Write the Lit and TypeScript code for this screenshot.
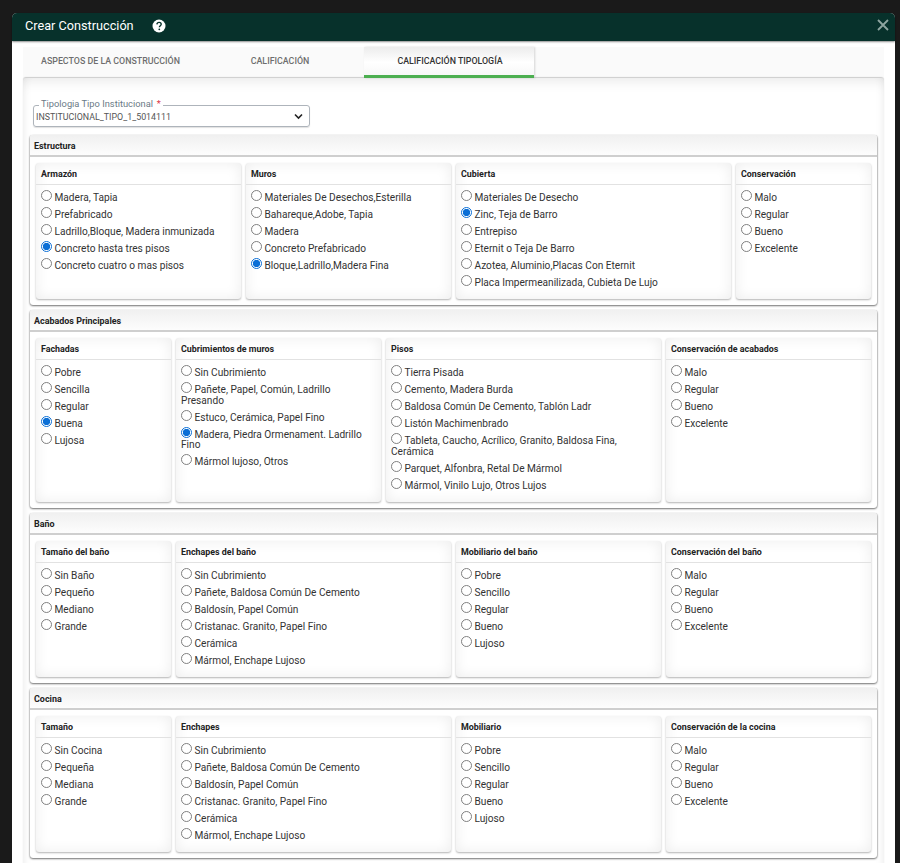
import { LitElement, html, css } from "lit";
import { customElement } from "lit/decorators.js";

type Card = { title: string; span: number; options: string[]; checked?: number };
type Section = { title: string; cards: Card[] };

const COND = ["Malo", "Regular", "Bueno", "Excelente"];
const ENCH = ["Sin Cubrimiento", "Pañete, Baldosa Común De Cemento", "Baldosín, Papel Común", "Cristanac. Granito, Papel Fino", "Cerámica", "Mármol, Enchape Lujoso"];
const MOB = ["Pobre", "Sencillo", "Regular", "Bueno", "Lujoso"];

const SECTIONS: Section[] = [
  { title: "Estructura", cards: [
    { title: "Armazón", span: 3, checked: 3, options: ["Madera, Tapia", "Prefabricado", "Ladrillo,Bloque, Madera inmunizada", "Concreto hasta tres pisos", "Concreto cuatro o mas pisos"] },
    { title: "Muros", span: 3, checked: 4, options: ["Materiales De Desechos,Esterilla", "Bahareque,Adobe, Tapia", "Madera", "Concreto Prefabricado", "Bloque,Ladrillo,Madera Fina"] },
    { title: "Cubierta", span: 4, checked: 1, options: ["Materiales De Desecho", "Zinc, Teja de Barro", "Entrepiso", "Eternit o Teja De Barro", "Azotea, Aluminio,Placas Con Eternit", "Placa Impermeanilizada, Cubieta De Lujo"] },
    { title: "Conservación", span: 2, options: COND },
  ]},
  { title: "Acabados Principales", cards: [
    { title: "Fachadas", span: 2, checked: 3, options: ["Pobre", "Sencilla", "Regular", "Buena", "Lujosa"] },
    { title: "Cubrimientos de muros", span: 3, checked: 3, options: ["Sin Cubrimiento", "Pañete, Papel, Común, Ladrillo Presando", "Estuco, Cerámica, Papel Fino", "Madera, Piedra Ormenament. Ladrillo Fino", "Mármol lujoso, Otros"] },
    { title: "Pisos", span: 4, options: ["Tierra Pisada", "Cemento, Madera Burda", "Baldosa Común De Cemento, Tablón Ladr", "Listón Machimenbrado", "Tableta, Caucho, Acrílico, Granito, Baldosa Fina, Cerámica", "Parquet, Alfonbra, Retal De Mármol", "Mármol, Vinilo Lujo, Otros Lujos"] },
    { title: "Conservación de acabados", span: 3, options: COND },
  ]},
  { title: "Baño", cards: [
    { title: "Tamaño del baño", span: 2, options: ["Sin Baño", "Pequeño", "Mediano", "Grande"] },
    { title: "Enchapes del baño", span: 4, options: ENCH },
    { title: "Mobiliario del baño", span: 3, options: MOB },
    { title: "Conservación del baño", span: 3, options: COND },
  ]},
  { title: "Cocina", cards: [
    { title: "Tamaño", span: 2, options: ["Sin Cocina", "Pequeña", "Mediana", "Grande"] },
    { title: "Enchapes", span: 4, options: ENCH },
    { title: "Mobiliario", span: 3, options: MOB },
    { title: "Conservación de la cocina", span: 3, options: COND },
  ]},
];

@customElement("app-root")
export class AppRoot extends LitElement {
  static styles = css`
    :host { display: block; height: 863px; overflow: hidden; background: #1a1a1a; font-family: Roboto, "Liberation Sans", sans-serif; color: #212529; padding: 13px 5px 0 12px; box-sizing: border-box; }
    * { box-sizing: border-box; }
    .modal { background: #fff; border-radius: 5px 5px 0 0; }
    .head { height: 28px; background: #07312b; border-radius: 5px 5px 0 0; display: flex; align-items: center; padding: 0 5px 0 13px; color: #fff; box-shadow: 0 1px 2px rgba(0,0,0,.45); position: relative; }
    .head h1 { margin: 0; font-size: 12.7px; font-weight: 400; line-height: 26px; height: 28px; }
    .help { margin-left: 18px; width: 14px; height: 14px; display: block; margin-top: -2px; }
    .close { margin-left: auto; width: 14px; height: 14px; display: block; margin-top: -5px; }
    .content { padding: 6px 11px 0; }
    .tabs { display: flex; height: 31px; background: #fafafa; }
    .tab { font-size: 8.85px; font-weight: 500; color: #6e6e6e; display: flex; align-items: center; justify-content: center; padding-bottom: 3px; }
    .tab.t1 { width: 171px; padding-left: 4px; }
    .tab.t2 { width: 170px; padding-left: 2px; }
    .tab.t3 { width: 170px; color: #333; background: linear-gradient(#ececec, #fff 55%, #f7f7f7); border-bottom: 3px solid #4caf50; box-shadow: 1px 0 2px rgba(0,0,0,.15); padding: 0 0 0 2px; }
    .panel { border-radius: 3px 3px 0 0; box-shadow: inset 0 10px 14px -8px rgba(0,0,0,.1), inset -8px 0 10px -8px rgba(0,0,0,.08), inset 8px 0 10px -8px rgba(0,0,0,.08), 0 -1px 1px rgba(0,0,0,.18); padding: 27px 7px 0; height: 790px; background: #fff; }
    .field { position: relative; width: 277px; height: 22px; margin: 0 0 8px 3px; border: 1px solid #aeb4bb; border-radius: 3px; box-shadow: 0 1px 1px rgba(0,0,0,.12); display: flex; align-items: center; padding: 1px 6px 0 2px; font-size: 8.87px; color: #555; }
    .field label { position: absolute; left: 5px; top: -8px; padding: 0 2px; background: #fff; font-size: 9.3px; line-height: 11px; color: #6a7a86; }
    .field label b { font-weight: 400; color: #dc3545; margin-left: 1.5px; }
    .field svg { margin-left: auto; width: 9px; height: 7px; display: block; }
    section { border-radius: 3px; margin-bottom: 5.2px; box-shadow: 0 1px 2px rgba(0,0,0,.55), 1px 0 1px rgba(0,0,0,.12), -1px 0 1px rgba(0,0,0,.08); background: #fff; padding-bottom: 6px; }
    section > h2 { margin: 0 0 6px; height: 22px; font-size: 8.95px; font-weight: 700; line-height: 23px; padding-left: 4px; color: #222; background: linear-gradient(#f0f0f0, #fdfdfd); border-bottom: 2px solid #cfcfcf; border-radius: 3px 3px 0 0; }
    .grid { display: grid; grid-template-columns: repeat(12, 1fr); gap: 5px; padding: 0 6px; }
    .s2 { grid-column: span 2; } .s3 { grid-column: span 3; } .s4 { grid-column: span 4; }
    .card { border-radius: 3px; background: #fff; box-shadow: inset 0 0 14px rgba(0,0,0,.075), 0 1px 2px rgba(0,0,0,.3); }
    .card h3 { margin: 0; height: 22px; line-height: 23px; padding-left: 5px; font-size: 8.9px; font-weight: 700; color: #222; border-bottom: 1px solid #e2e2e2; }
    .opts { padding: 5px 8px 7px 5px; }
    .opt { display: block; font-size: 10.15px; line-height: 10.5px; color: #333; padding: 3px 0 3.5px; }
    .opt input { appearance: none; -webkit-appearance: none; width: 11px; height: 11px; margin: -6px 2.5px 0 0; border: 1px solid #808080; border-radius: 50%; background: #fff; vertical-align: 0; display: inline-block; }
    .opt input:checked { border-color: #0b6fd6; background: radial-gradient(circle, #0b6fd6 0 3.4px, #fff 3.9px); }
  `;

  private renderCard(c: Card) {
    return html`<div class="card s${c.span}">
      <h3>${c.title}</h3>
      <div class="opts">
        ${c.options.map((o, i) => html`<label class="opt"><input type="radio" name=${c.title} ?checked=${i === c.checked} />${o}</label>`)}
      </div>
    </div>`;
  }

  render() {
    return html`<div class="modal">
      <div class="head">
        <h1>Crear Construcción</h1>
        <svg class="help" viewBox="0 0 14 14"><circle cx="7" cy="7" r="6.5" fill="#fff"/><path d="M4.9 5.4c.1-1.3 1-2 2.2-2 1.3 0 2.1.8 2.1 1.8 0 1.5-1.8 1.6-1.8 3.1" fill="none" stroke="#07312b" stroke-width="1.4"/><circle cx="7.3" cy="10.3" r=".9" fill="#07312b"/></svg>
        <svg class="close" viewBox="0 0 14 14"><path d="M2 2l10 10M12 2L2 12" stroke="#8fa5a0" stroke-width="1.8" fill="none"/></svg>
      </div>
      <div class="content">
        <div class="tabs">
          <div class="tab t1">ASPECTOS DE LA CONSTRUCCIÓN</div>
          <div class="tab t2">CALIFICACIÓN</div>
          <div class="tab t3">CALIFICACIÓN TIPOLOGÍA</div>
        </div>
        <div class="panel">
          <div class="field">
            <label>Tipologia Tipo Institucional <b>*</b></label>
            INSTITUCIONAL_TIPO_1_5014111
            <svg viewBox="0 0 9 7"><path d="M1 1.5l3.5 3.5L8 1.5" fill="none" stroke="#222" stroke-width="1.6"/></svg>
          </div>
          ${SECTIONS.map(s => html`<section>
            <h2>${s.title}</h2>
            <div class="grid">${s.cards.map(c => this.renderCard(c))}</div>
          </section>`)}
        </div>
      </div>
    </div>`;
  }
}
